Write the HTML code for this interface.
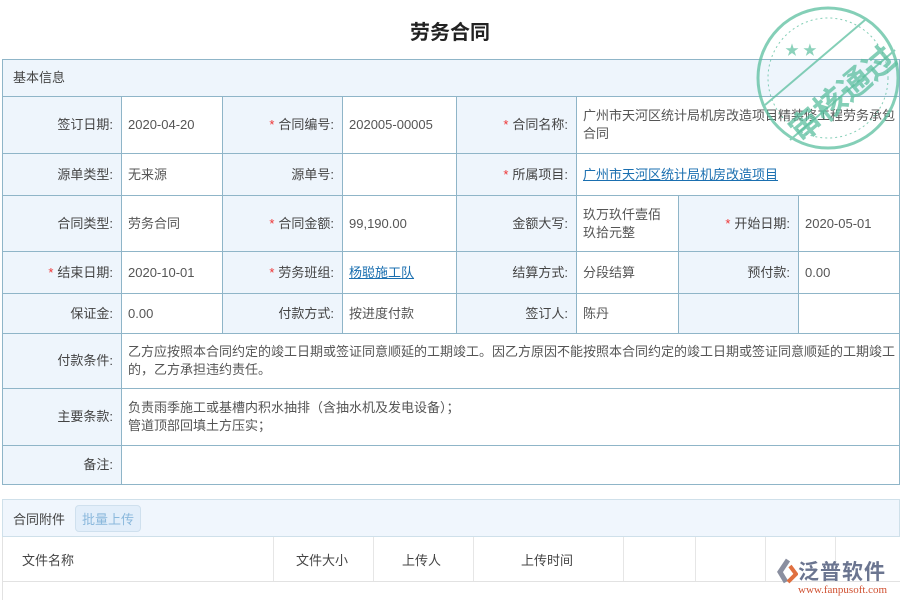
<!DOCTYPE html>
<html><head><meta charset="utf-8"><style>
body{margin:0;width:900px;height:600px;overflow:hidden;background:#fff;font-family:"Liberation Sans","Noto Sans CJK SC",sans-serif;font-size:13px;color:#444;position:relative}
.c{position:absolute;box-sizing:border-box;border-right:1px solid #8fb5c8;border-bottom:1px solid #8fb5c8;display:flex;align-items:center;padding:0 6px;line-height:18px}
.l{background:#eef5fc;justify-content:flex-end;padding-right:8px}
.v{background:#fff;color:#555;padding-right:2px}
.r{color:#e33;margin-right:4px}
a{color:#1a6fb0;text-decoration:underline}
.h{position:absolute;box-sizing:border-box;display:flex;align-items:center}
</style></head><body>
<div style="position:absolute;left:0;width:900px;top:16px;text-align:center;font-size:20px;font-weight:bold;color:#222">劳务合同</div>
<div class="c" style="left:2px;top:59px;width:898px;height:38px;background:#eef5fc;border-top:1px solid #8fb5c8;border-left:1px solid #8fb5c8;padding-left:10px">基本信息</div>

<div id="g"></div>
<script>
var H=[[97,154],[154,196],[196,252],[252,294],[294,334],[334,389],[389,446],[446,485]];
var rows=[
[['l',2,122,'签订日期:'],['v',122,223,'2020-04-20'],['l',223,343,'<span class=r>*</span>合同编号:'],['v',343,457,'202005-00005'],['l',457,577,'<span class=r>*</span>合同名称:'],['v',577,900,'广州市天河区统计局机房改造项目精装修工程劳务承包<br>合同']],
[['l',2,122,'源单类型:'],['v',122,223,'无来源'],['l',223,343,'源单号:'],['v',343,457,''],['l',457,577,'<span class=r>*</span>所属项目:'],['v',577,900,'<a>广州市天河区统计局机房改造项目</a>']],
[['l',2,122,'合同类型:'],['v',122,223,'劳务合同'],['l',223,343,'<span class=r>*</span>合同金额:'],['v',343,457,'99,190.00'],['l',457,577,'金额大写:'],['v',577,679,'玖万玖仟壹佰<br>玖拾元整'],['l',679,799,'<span class=r>*</span>开始日期:'],['v',799,900,'2020-05-01']],
[['l',2,122,'<span class=r>*</span>结束日期:'],['v',122,223,'2020-10-01'],['l',223,343,'<span class=r>*</span>劳务班组:'],['v',343,457,'<a>杨聪施工队</a>'],['l',457,577,'结算方式:'],['v',577,679,'分段结算'],['l',679,799,'预付款:'],['v',799,900,'0.00']],
[['l',2,122,'保证金:'],['v',122,223,'0.00'],['l',223,343,'付款方式:'],['v',343,457,'按进度付款'],['l',457,577,'签订人:'],['v',577,679,'陈丹'],['l',679,799,''],['v',799,900,'']],
[['l',2,122,'付款条件:'],['v',122,900,'乙方应按照本合同约定的竣工日期或签证同意顺延的工期竣工。因乙方原因不能按照本合同约定的竣工日期或签证同意顺延的工期竣工<br>的，乙方承担违约责任。']],
[['l',2,122,'主要条款:'],['v',122,900,'负责雨季施工或基槽内积水抽排（含抽水机及发电设备）；<br>管道顶部回填土方压实；']],
[['l',2,122,'备注:'],['v',122,900,'']]];
var s='';rows.forEach(function(r,i){r.forEach(function(c){s+='<div class="c '+c[0]+'" style="left:'+c[1]+'px;width:'+(c[2]-c[1])+'px;top:'+H[i][0]+'px;height:'+(H[i][1]-H[i][0])+'px;'+(c[1]==2?'border-left:1px solid #8fb5c8;':'')+'">'+c[3]+'</div>'})});
document.getElementById('g').innerHTML=s;
</script>

<div class="h" style="left:2px;top:499px;width:898px;height:38px;background:#f0f6fd;border:1px solid #cfe0ea;padding-left:10px">合同附件<span style="margin-left:10px;background:#e2eefa;border:1px solid #cfe0ee;border-radius:4px;color:#8ab8dc;padding:3px 6px">批量上传</span></div>
<div style="position:absolute;left:2px;top:537px;width:898px;height:44px;border-bottom:1px solid #e2e2e2;border-left:1px solid #e2e2e2"></div>
<div style="position:absolute;left:2px;top:581px;width:1px;height:19px;background:#e2e2e2"></div>
<div class="h" style="left:22px;top:537px;height:44px">文件名称</div>
<div class="h" style="left:296px;top:537px;height:44px">文件大小</div>
<div class="h" style="left:402px;top:537px;height:44px">上传人</div>
<div class="h" style="left:521px;top:537px;height:44px">上传时间</div>
<div style="position:absolute;top:537px;height:44px;left:273px;width:1px;background:#e6e6e6"></div>
<div style="position:absolute;top:537px;height:44px;left:373px;width:1px;background:#e6e6e6"></div>
<div style="position:absolute;top:537px;height:44px;left:473px;width:1px;background:#e6e6e6"></div>
<div style="position:absolute;top:537px;height:44px;left:623px;width:1px;background:#e6e6e6"></div>
<div style="position:absolute;top:537px;height:44px;left:695px;width:1px;background:#e6e6e6"></div>
<div style="position:absolute;top:537px;height:44px;left:765px;width:1px;background:#e6e6e6"></div>
<div style="position:absolute;top:537px;height:44px;left:835px;width:1px;background:#e6e6e6"></div>

<svg style="position:absolute;left:750px;top:0" width="150" height="160" viewBox="0 0 150 160">
<g fill="none" stroke="#5cbf9f" opacity="0.75">
<circle cx="78" cy="78" r="70" stroke-width="3"/>
<circle cx="78" cy="78" r="60" stroke-width="1" stroke-dasharray="2 3"/>
<line x1="15" y1="105" x2="115" y2="20" stroke-width="2"/>
<line x1="40" y1="140" x2="145" y2="50" stroke-width="2"/>
</g>
<text x="85" y="108" transform="rotate(-40 85 85)" text-anchor="middle" font-size="32" font-weight="bold" fill="#5cbf9f" opacity="0.75" font-family="Noto Sans CJK SC,sans-serif">审核通过</text>
<text x="35" y="55" fill="#5cbf9f" font-size="14" opacity="0.7">★ ★</text>
</svg>

<div style="position:absolute;left:776px;top:556px;width:120px;height:44px">
<svg width="22" height="26" style="position:absolute;left:0;top:2px"><path d="M12 2 L4 14 L10 24" stroke="#8a8fa0" stroke-width="5" fill="none"/><path d="M14 8 L20 16 L12 24" stroke="#e07040" stroke-width="4" fill="none"/></svg>
<div style="position:absolute;left:22px;top:0;font-size:21px;font-weight:bold;color:#6b7590;letter-spacing:1px">泛普软件</div>
<div style="position:absolute;left:22px;top:28px;font-size:11px;color:#d05030;font-family:'Liberation Serif',serif">www.fanpusoft.com</div>
</div>
</body></html>
